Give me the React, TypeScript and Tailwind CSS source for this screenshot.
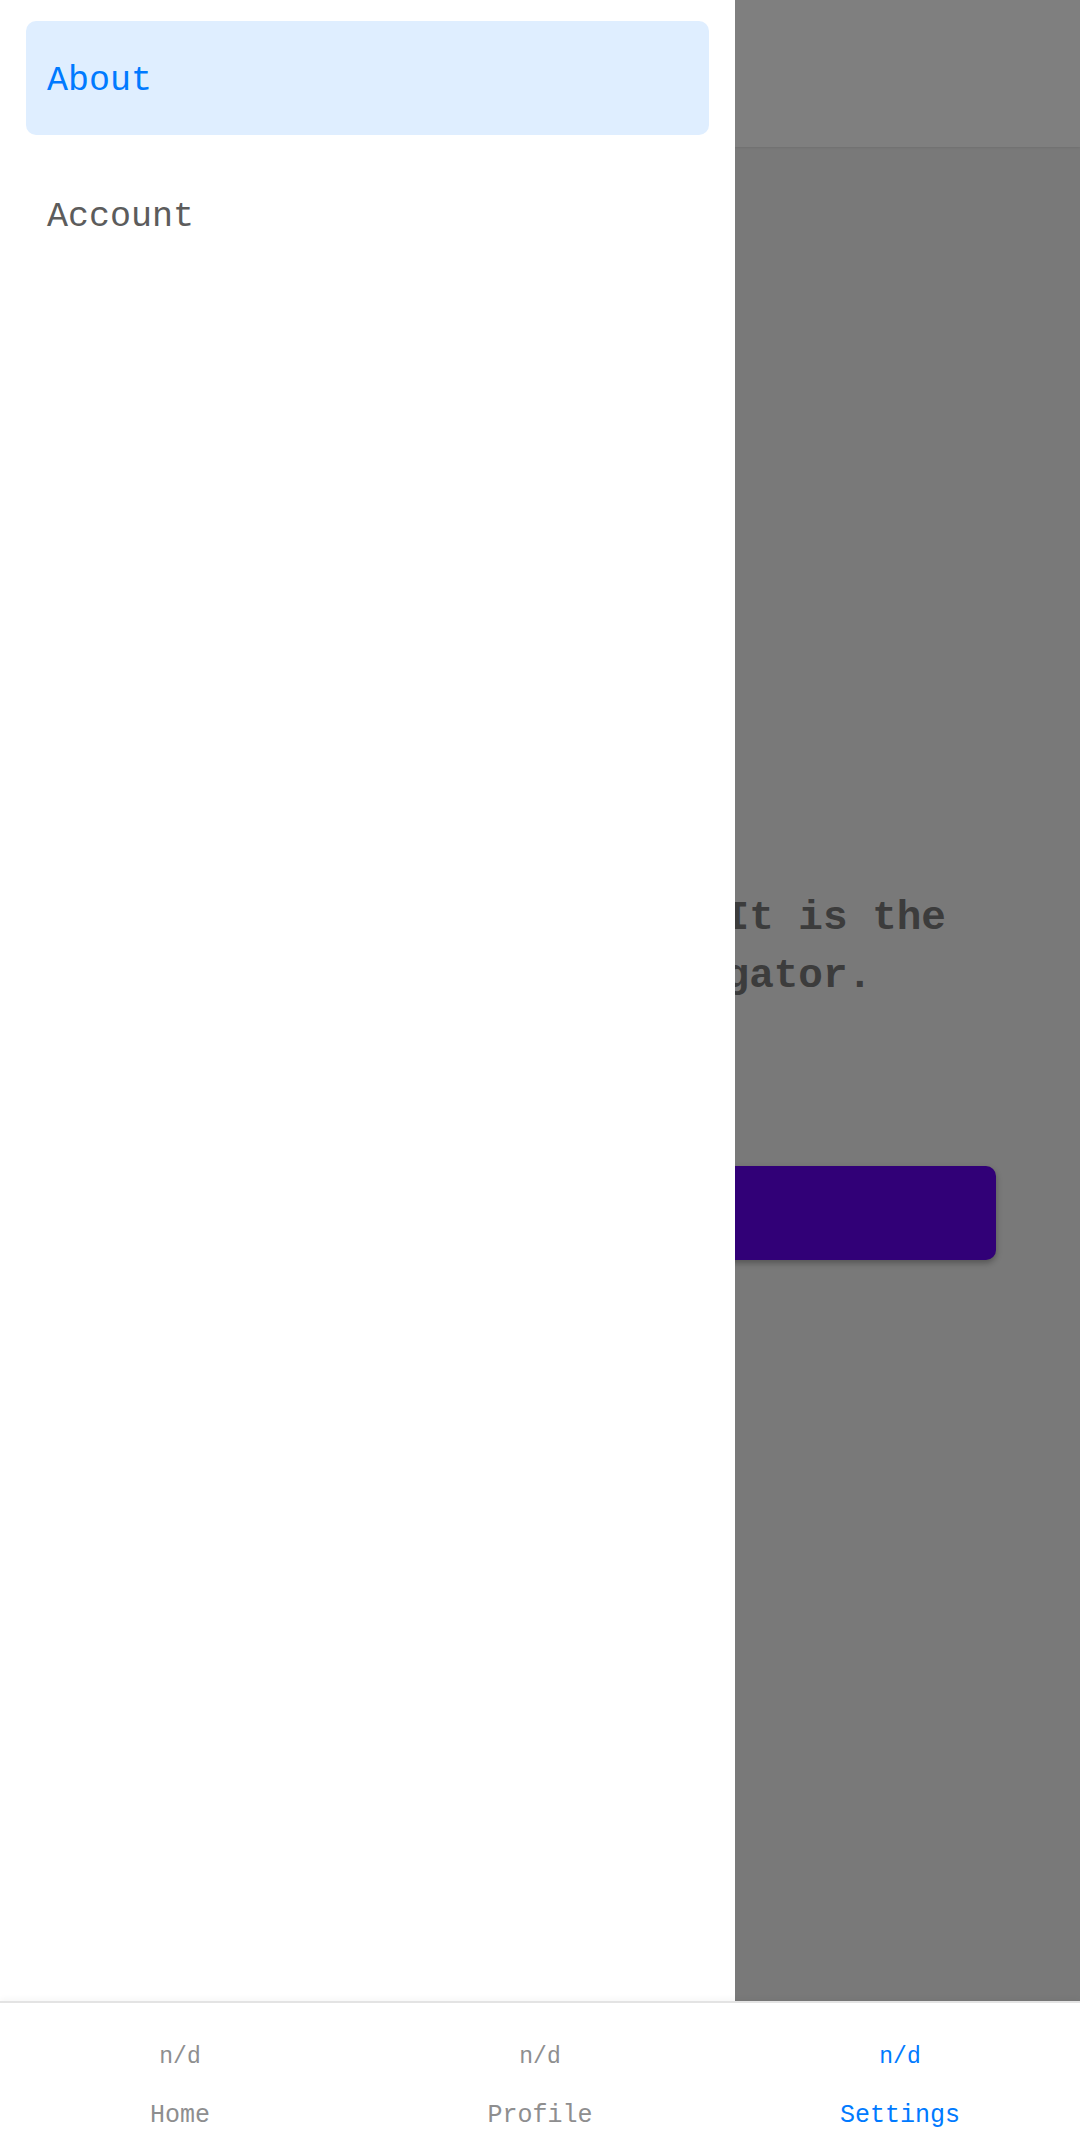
import { useState } from "react";

const drawerItems = [
  { name: "About", active: true },
  { name: "Account", active: false },
];

const tabs = [
  { name: "Home", active: false },
  { name: "Profile", active: false },
  { name: "Settings", active: true },
];

function SettingsScreen() {
  return (
    <div className="flex flex-1 flex-col bg-[#f2f2f2]">
      <div className="h-[147px] bg-white shadow-[0_1px_2px_rgba(0,0,0,0.08)]" />
      <div className="flex flex-1 flex-col items-center justify-center px-[84px]">
        <p className="text-center text-[41px] leading-[58px] font-bold text-[#787878]">
          This is a Settings tab. It is the
          <br />
          third tab in the navigator.
        </p>
        <button className="mt-[161px] flex h-[94px] w-full items-center justify-center rounded-[10px] bg-[#6200ee] text-[30px] text-white shadow-[0_3px_6px_rgba(0,0,0,0.3)]">
          OPEN DRAWER
        </button>
      </div>
    </div>
  );
}

export default function App() {
  const [active] = useState("About");

  return (
    <div className="relative flex h-[2131px] w-[1080px] flex-col overflow-hidden bg-white font-['Liberation_Mono',monospace]">
      <div className="relative flex flex-1 flex-col">
        <SettingsScreen />

        {/* drawer overlay */}
        <div className="absolute inset-0 bg-black/50" />

        {/* drawer */}
        <div className="absolute inset-y-0 left-0 flex w-[735px] flex-col bg-white pt-[10px]">
          {drawerItems.map((item) => (
            <div
              key={item.name}
              className={
                item.name === active
                  ? "mx-[26px] my-[11px] flex h-[114px] items-center rounded-[10px] bg-[#dfeeff] px-[21px] pt-[6px] text-[35px] text-[#007aff]"
                  : "mx-[26px] my-[11px] flex h-[114px] items-center rounded-[10px] px-[21px] pt-[6px] text-[35px] text-[#5c5c5c]"
              }
            >
              {item.name}
            </div>
          ))}
        </div>
      </div>

      {/* bottom tabs */}
      <div className="relative z-10 flex h-[130px] border-t-2 border-[#e3e3e3] bg-white shadow-[0_-2px_6px_rgba(0,0,0,0.04)]">
        {tabs.map((tab) => (
          <div
            key={tab.name}
            className={
              tab.active
                ? "flex flex-1 flex-col items-center pt-[40px] text-[#007aff]"
                : "flex flex-1 flex-col items-center pt-[40px] text-[#8e8e8f]"
            }
          >
            <span className="text-[23px] leading-[28px]">n/d</span>
            <span className="mt-[30px] text-[25px] leading-[30px]">{tab.name}</span>
          </div>
        ))}
      </div>
    </div>
  );
}
